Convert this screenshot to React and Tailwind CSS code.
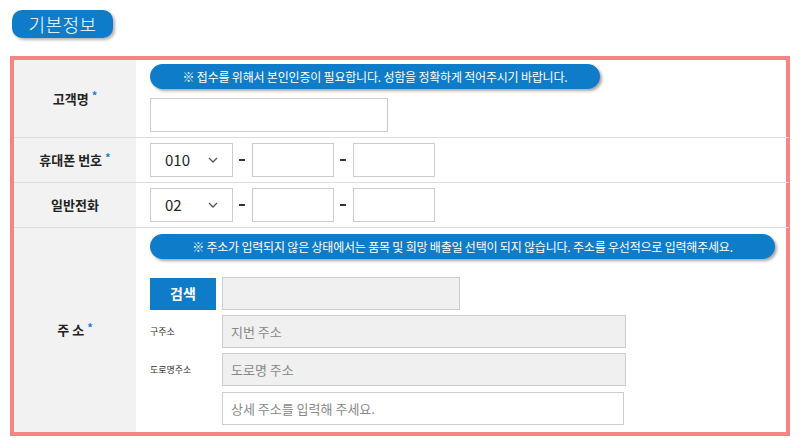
import React from "react";

const font = { fontFamily: '"Noto Sans CJK KR", "Noto Sans", sans-serif' };

function Chevron() {
  return (
    <svg width="10" height="6" viewBox="0 0 10 6" className="ml-auto">
      <path d="M1 1l4 4 4-4" fill="none" stroke="#555" strokeWidth="1.3" />
    </svg>
  );
}

function Label({ children, required }) {
  return (
    <div className="flex items-center justify-center bg-[#f2f2f2] text-[13px] font-bold text-[#222]">
      {children}
      {required && <span className="ml-[3px] -mt-[6px] text-[11px] text-[#1b7fcc]">*</span>}
    </div>
  );
}

function Notice({ children, width }) {
  return (
    <div
      className={`flex h-[25px] items-center justify-center rounded-full bg-[#0f7cc9] text-[12px] tracking-[-0.2px] text-white shadow-[2px_2px_3px_rgba(0,0,0,0.35)] ${width}`}
    >
      {children}
    </div>
  );
}

function Dash() {
  return <span className="ml-[6px] mr-[7px] h-[2px] w-[6px] bg-[#333]" />;
}

function PhoneRow({ first }) {
  return (
    <div className="flex items-center">
      <div className="flex h-[34px] w-[83px] items-center border border-[#ccc] bg-white px-[14px] text-[15px] text-[#222]">
        {first}
        <Chevron />
      </div>
      <Dash />
      <div className="h-[34px] w-[82px] border border-[#ccc] bg-white" />
      <Dash />
      <div className="h-[34px] w-[82px] border border-[#ccc] bg-white" />
    </div>
  );
}

export default function App() {
  return (
    <div className="h-[446px] w-[800px] bg-white" style={font}>
      <div className="px-[12px] pt-[10px]">
        <div className="flex h-[28px] w-[101px] items-center justify-center rounded-[10px] bg-[#0f7cc9] text-[18px] font-light tracking-[0.5px] text-white shadow-[2px_2px_3px_rgba(0,0,0,0.3)]">
          기본정보
        </div>
      </div>

      <div className="mx-[10px] mt-[18px] w-[780px] border-4 border-[#f58585]">
        <div className="grid grid-cols-[122px_1fr]">
          {/* 고객명 */}
          <Label required>고객명</Label>
          <div className="flex h-[77px] flex-col gap-[9px] px-[14px] pt-[4px]">
            <Notice width="w-[450px]">
              ※ 접수를 위해서 본인인증이 필요합니다. 성함을 정확하게 적어주시기 바랍니다.
            </Notice>
            <div className="h-[34px] w-[238px] border border-[#ccc] bg-white" />
          </div>

          {/* 휴대폰 번호 */}
          <div className="col-span-2 h-px bg-[#ddd]" />
          <Label required>휴대폰 번호</Label>
          <div className="flex h-[44px] items-center px-[14px]">
            <PhoneRow first="010" />
          </div>

          {/* 일반전화 */}
          <div className="col-span-2 h-px bg-[#ddd]" />
          <Label>일반전화</Label>
          <div className="flex h-[44px] items-center px-[14px]">
            <PhoneRow first="02" />
          </div>

          {/* 주소 */}
          <div className="col-span-2 h-px bg-[#ddd]" />
          <Label required>주 소</Label>
          <div className="flex h-[204px] flex-col px-[14px] pt-[6px]">
            <Notice width="w-[625px]">
              ※ 주소가 입력되지 않은 상태에서는 품목 및 희망 배출일 선택이 되지 않습니다. 주소를 우선적으로 입력해주세요.
            </Notice>
            <div className="mt-[18px] flex items-center gap-[6px]">
              <div className="flex h-[32px] w-[66px] items-center justify-center bg-[#0f7cc9] text-[14px] font-bold text-white">
                검색
              </div>
              <div className="h-[33px] w-[238px] border border-[#ccc] bg-[#f0f0f0]" />
            </div>
            <div className="mt-[5px] flex items-center">
              <span className="w-[72px] text-[9px] text-[#333]">구주소</span>
              <div className="flex h-[33px] w-[404px] items-center border border-[#ccc] bg-[#f0f0f0] px-[8px] text-[13px] text-[#888]">
                지번 주소
              </div>
            </div>
            <div className="mt-[5px] flex items-center">
              <span className="w-[72px] text-[9px] text-[#333]">도로명주소</span>
              <div className="flex h-[33px] w-[404px] items-center border border-[#ccc] bg-[#f0f0f0] px-[8px] text-[13px] text-[#888]">
                도로명 주소
              </div>
            </div>
            <div className="mt-[6px] flex items-center">
              <span className="w-[72px]" />
              <div className="flex h-[33px] w-[402px] items-center border border-[#ccc] bg-white px-[8px] text-[13px] text-[#888]">
                상세 주소를 입력해 주세요.
              </div>
            </div>
          </div>
        </div>
      </div>
    </div>
  );
}
